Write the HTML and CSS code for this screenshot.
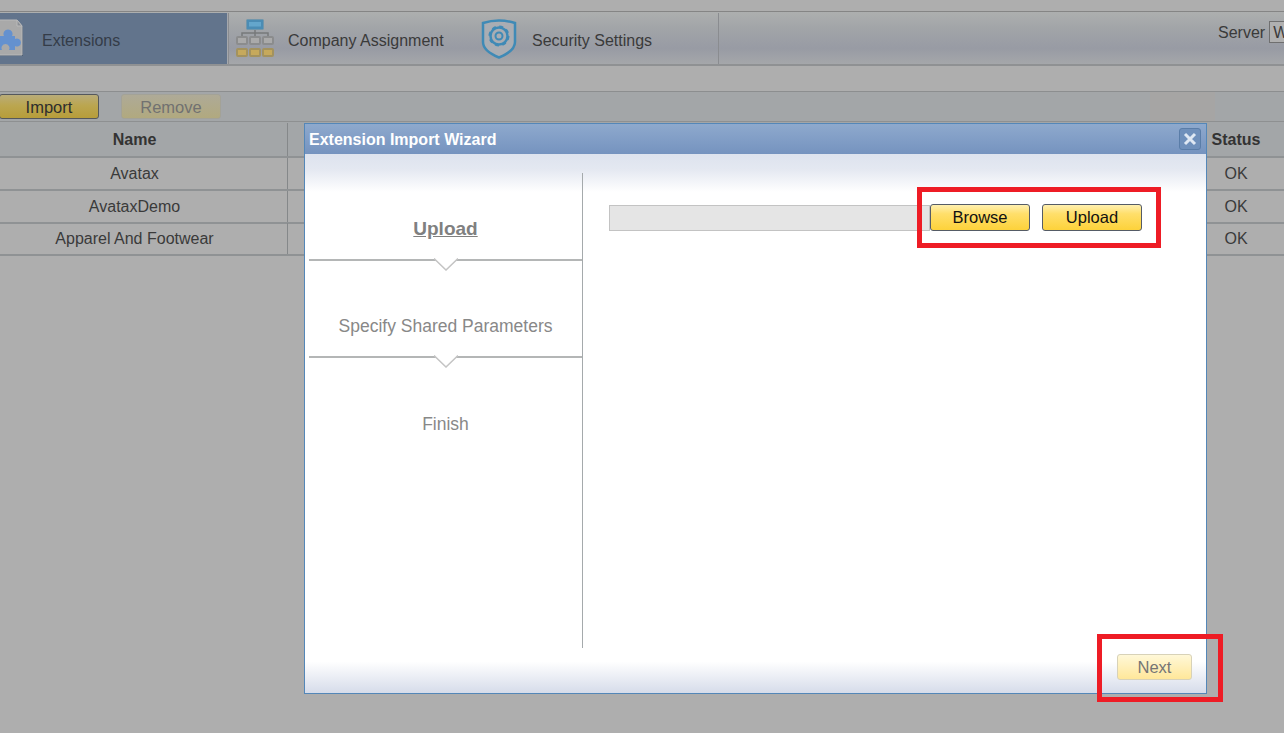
FILE: index.html
```html
<!DOCTYPE html>
<html lang="en">
<head>
<meta charset="utf-8">
<title>Extensions</title>
<link rel="stylesheet" href="styles.css">
</head>
<body>
<div class="page">
  <nav class="nav">
    <div class="tab tab-active">
      <svg class="icon icon-ext" width="48" height="38" viewBox="0 0 48 38">
        <path d="M1 2H42L48 8V37H1Z" fill="#3f4a58" opacity=".45"/>
        <path d="M1 1H42L47 7V36H1Z" fill="#a9a9a9" stroke="#b9b9b9"/>
        <path d="M42 1V7H47Z" fill="#8d9095" stroke="#b9b9b9"/>
        <path d="M25 17H29A4.500 4.500 0 1 1 37 17H40V20A4 4 0 1 1 40 27V31H34A4 4 0 1 0 27 31H25Z" fill="#6491cf"/>
      </svg>
      <span class="tab-label">Extensions</span>
    </div>
    <div class="tab tab-company">
      <svg class="icon icon-org" width="38" height="39" viewBox="0 0 38 39">
        <rect x="10.500" y="0.500" width="17" height="10" rx="1" fill="#4b8cb4" stroke="#7196ab"/>
        <rect x="13" y="3" width="12" height="4.500" fill="#64a6cc"/>
        <path d="M19 11V14M6 18V14H32V18M19 14V18" fill="none" stroke="#77797b" stroke-width="1.500"/>
        <g fill="#aaaaaa" stroke="#8b8c8d" stroke-width="2">
          <rect x="1" y="18" width="10" height="7" rx="1"/>
          <rect x="14" y="18" width="10" height="7" rx="1"/>
          <rect x="27" y="18" width="10" height="7" rx="1"/>
        </g>
        <g fill="#c6a95c" stroke="#a3925e" stroke-width="2">
          <rect x="1" y="30" width="10" height="7" rx="1"/>
          <rect x="14" y="30" width="10" height="7" rx="1"/>
          <rect x="27" y="30" width="10" height="7" rx="1"/>
        </g>
      </svg>
      <span class="tab-label">Company Assignment</span>
    </div>
    <div class="tab tab-security">
      <svg class="icon icon-shield" width="36" height="40" viewBox="0 0 36 40">
        <path d="M2 4Q10 1.500 18 1.500T34 4V23Q34 32 18 38.500Q2 32 2 23Z" fill="#a9adb3" stroke="#3f8ab6" stroke-width="2.500"/>
        <circle cx="18" cy="17" r="8.500" fill="none" stroke="#3f8ab6" stroke-width="2.500"/>
        <circle cx="18" cy="17" r="9.500" fill="none" stroke="#3f8ab6" stroke-width="2" stroke-dasharray="3.900 3.560"/>
        <circle cx="18" cy="17" r="3.500" fill="none" stroke="#3f8ab6" stroke-width="2"/>
      </svg>
      <span class="tab-label">Security Settings</span>
    </div>
    <div class="server">
      <span class="server-label">Server</span>
      <span class="server-box">WIN</span>
    </div>
  </nav>
  <div class="spacer"></div>
  <div class="toolbar">
    <button class="btn btn-import">Import</button>
    <button class="btn btn-remove">Remove</button>
    <div class="toolbar-shade"></div>
  </div>
  <div class="table">
    <div class="row row-head">
      <div class="cell cell-name">Name</div>
      <div class="cell"></div>
      <div class="cell cell-status">Status</div>
    </div>
    <div class="row">
      <div class="cell cell-name">Avatax</div>
      <div class="cell"></div>
      <div class="cell cell-status">OK</div>
    </div>
    <div class="row">
      <div class="cell cell-name">AvataxDemo</div>
      <div class="cell"></div>
      <div class="cell cell-status">OK</div>
    </div>
    <div class="row row-short">
      <div class="cell cell-name">Apparel And Footwear</div>
      <div class="cell"></div>
      <div class="cell cell-status">OK</div>
    </div>
  </div>
</div>

<section class="modal">
  <header class="modal-head">
    <span class="modal-title">Extension Import Wizard</span>
    <span class="modal-close">
      <svg width="14" height="14" viewBox="0 0 14 14"><path d="M2 2L12 12M12 2L2 12" stroke="#dfe8f3" stroke-width="3"/></svg>
    </span>
  </header>
  <div class="modal-body">
    <aside class="steps">
      <div class="step step-current"><span>Upload</span></div>
      <div class="step-rule"><svg class="notch" width="24" height="13" viewBox="0 0 24 13"><path d="M0 .5L12 12L24 .5" fill="#fff" stroke="#c4c4c4" stroke-width="1.500"/></svg></div>
      <div class="step step-two"><span>Specify Shared Parameters</span></div>
      <div class="step-rule"><svg class="notch" width="24" height="13" viewBox="0 0 24 13"><path d="M0 .5L12 12L24 .5" fill="#fff" stroke="#c4c4c4" stroke-width="1.500"/></svg></div>
      <div class="step step-three"><span>Finish</span></div>
    </aside>
    <div class="pane">
      <div class="file-field"></div>
      <button class="btn btn-gold btn-browse">Browse</button>
      <button class="btn btn-gold btn-upload">Upload</button>
    </div>
  </div>
  <footer class="modal-foot">
    <button class="btn btn-next">Next</button>
  </footer>
</section>

<div class="callout callout-upload"></div>
<div class="callout callout-next"></div>
</body>
</html>
```

FILE: styles.css
```css
* { box-sizing: border-box; }

html, body {
  margin: 0;
  height: 100%;
  overflow: hidden;
}

body {
  background: #aeaeae;
  color: #3a3a3a;
  font-family: "Liberation Sans", Arial, sans-serif;
  font-size: 16px;
}

.page {
  padding-top: 11px;
}

/* Navigation */
.nav {
  display: flex;
  height: 55px;
  align-items: stretch;
  padding-top: 1px;
  border-top: 1px solid #858585;
  border-bottom: 2px solid #8f9193;
  background: linear-gradient(#adafaf 0%, #a2a5a8 30%, #989ba4 70%, #a5a7aa 100%);
}

.tab {
  display: flex;
  align-items: center;
  flex: none;
  border-right: 1px solid #8a8c90;
}

.tab-active {
  width: 228px;
  background: #62748c;
  border-right: 1px solid #a5a8ad;
}

.icon {
  flex: none;
  align-self: flex-start;
  margin-top: 6px;
}

.icon-ext {
  margin-left: -25px;
  margin-right: 19px;
}

.tab-label {
  white-space: nowrap;
  margin-top: 4px;
}

.tab-active .tab-label {
  color: #343c48;
}

.tab-company {
  border-right: 0;
  border-left: 1px solid #8a8c90;
  width: 246px;
  padding-left: 7px;
}

.icon-org {
  margin-right: 14px;
}

.tab-security {
  width: 245px;
  padding-left: 7px;
}

.icon-shield {
  margin-right: 15px;
}

.server {
  margin-left: auto;
  display: flex;
  align-items: flex-start;
  gap: 4px;
  padding-top: 8px;
  overflow: hidden;
  width: 66px;
  flex: none;
}

.server-label {
  margin-top: 3px;
}

.server-box {
  flex: none;
  width: 30px;
  height: 22px;
  border: 1px solid #6f6f6f;
  background: #b0b0b0;
  padding-left: 3px;
  line-height: 21px;
  overflow: hidden;
}

.spacer {
  height: 25px;
}

/* Toolbar */
.toolbar {
  display: flex;
  align-items: flex-start;
  height: 31px;
  padding-top: 2px;
  border-top: 1px solid #8c8e8f;
  border-bottom: 1px solid #8e9091;
  background: #a3a6a8;
}

.toolbar-shade {
  margin-left: auto;
  margin-right: 69px;
  margin-top: -2px;
  width: 65px;
  height: 29px;
  background: #a6a5a4;
}

.btn {
  display: block;
  margin: 0;
  font-family: inherit;
  font-size: 16.500px;
  padding: 0;
  border-radius: 3px;
  flex: none;
}

.btn-import {
  width: 100px;
  height: 25px;
  margin-left: -1px;
  padding-top: 1px;
  border: 1px solid #55585c;
  color: #2e2e2e;
  background: linear-gradient(#b9ac79 0%, #bba650 45%, #b79d3a 100%);
}

.btn-remove {
  width: 100px;
  height: 25px;
  margin-left: 22px;
  padding-top: 1px;
  border: 1px solid #a3a297;
  color: #717171;
  background: linear-gradient(#aeaa97 0%, #b1a97f 100%);
}

/* Table */
.table {
  margin-left: -18px;
}

.row {
  display: grid;
  grid-template-columns: 306px 1fr 96px;
  height: 33px;
  border-bottom: 2px solid #8f9294;
  align-items: stretch;
}

.row-head {
  height: 36px;
  padding-top: 1px;
  background: #a3a6a8;
  font-weight: bold;
  color: #333;
}

.row-short {
  margin-top: -1px;
}

.cell {
  display: flex;
  align-items: center;
  justify-content: center;
  white-space: nowrap;
}

.cell-name {
  border-right: 1px solid #85888a;
}

/* Modal */
.modal {
  position: absolute;
  left: 304px;
  top: 123px;
  width: 903px;
  height: 571px;
  display: flex;
  flex-direction: column;
  background: #fff;
  border: 1px solid #5487b8;
}

.modal-head {
  flex: none;
  height: 30px;
  display: flex;
  align-items: center;
  justify-content: space-between;
  padding: 0 5px 0 4px;
  background: linear-gradient(#8ea9cd, #7593bf);
}

.modal-title {
  color: #fff;
  font-weight: bold;
  margin-top: 1px;
}

.modal-close {
  display: flex;
  align-items: center;
  justify-content: center;
  width: 22px;
  height: 22px;
  border: 1px solid #5a7da8;
  border-radius: 3px;
  background: #6f90bb;
}

.modal-body {
  flex: none;
  height: 494px;
  display: flex;
  align-items: flex-start;
  padding: 19px 0 0 4px;
  background: linear-gradient(#dde3ee 0, #e4e8f1 15px, #ffffff 38px);
}

.steps {
  flex: none;
  width: 274px;
  height: 475px;
  border-right: 1px solid #a5aaac;
  display: flex;
  flex-direction: column;
  color: #888;
  font-size: 17.500px;
}

.step {
  display: flex;
  align-items: center;
  justify-content: center;
  white-space: nowrap;
}

.step-current {
  height: 86px;
  padding-top: 26px;
  font-size: 19px;
  font-weight: bold;
  color: #808080;
  text-decoration: underline;
}

.step-two {
  height: 95px;
  padding-top: 35px;
}

.step-three {
  height: 112px;
  padding-top: 20px;
}

.step-rule {
  flex: none;
  height: 2px;
  background: #b4b6b6;
  position: relative;
}

.notch {
  position: absolute;
  left: 125px;
  top: -1px;
}

.pane {
  flex: 1;
  display: flex;
  align-items: flex-start;
  padding: 31px 0 0 26px;
}

.file-field {
  width: 321px;
  height: 26px;
  margin-top: 1px;
  background: #e5e5e5;
  border: 1px solid #c3c3c3;
}

.btn-gold {
  width: 100px;
  height: 27px;
  border: 1px solid #555c66;
  color: #111;
  background: linear-gradient(#fff0b0 0%, #ffdf6b 35%, #fdd23a 100%);
}

.btn-upload {
  margin-left: 12px;
}

.modal-foot {
  flex: 1;
  display: flex;
  justify-content: flex-end;
  padding: 6px 14px 0 0;
  background: linear-gradient(#ffffff 0, #ffffff 30%, #d6dcea 100%);
}

.btn-next {
  width: 75px;
  height: 26px;
  border: 1px solid #d8d2b8;
  color: #757575;
  background: linear-gradient(#fff8d8 0%, #ffe79a 100%);
}

/* Callouts */
.callout {
  position: absolute;
  border: 5px solid #ee1c25;
}

.callout-upload {
  left: 917px;
  top: 187px;
  width: 244px;
  height: 61px;
}

.callout-next {
  left: 1097px;
  top: 634px;
  width: 126px;
  height: 68px;
}
```
